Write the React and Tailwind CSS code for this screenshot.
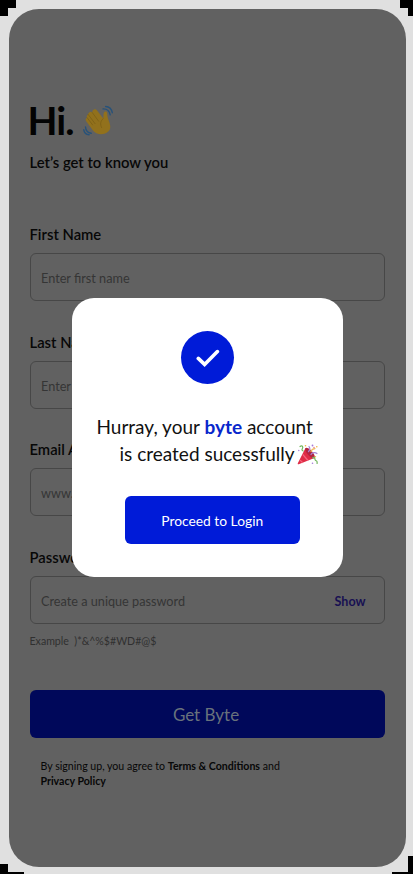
import React from "react";

function WaveIcon() {
  return (
    <svg viewBox="0 0 32 32" className="h-8 w-8" fill="none">
      <path d="M6.200 7.400c1.300-1 2.400-.6 3.200.3C9 6 9.700 4.800 11 4.400c1.500-.5 2.600.3 3.500 1.500l5.700 7.700c.5-1.900 0-4.100.6-5.800.7-1.800 3-1.700 3.300.1.300 2.200.3 4.300 1.200 6.500 1.900 4.700 3.600 9.400-.6 12.600-4.700 3.500-11.400 2.900-14.900-1.800L3.200 16.300c-1.200-1.700-.3-3.200.9-3.600-.8-1.600-.1-2.900 1-3.300.1-.8.500-1.600 1.100-2z" fill="#92711c" />
      <path d="m9.400 7.700 6.200 8.500M5.100 9.400l7 9.300M4.100 12.700l5.500 7.200M20.200 13.600c-3 2.500-3.200 5.800-1.600 9" stroke="#785b14" strokeWidth=".7" strokeLinecap="round" />
      <path d="M20 3.900c3.900-.2 6.500 2.300 7.200 6M22.600 1.500c3.500.2 6 2.600 6.700 6.200M2.500 22c.2 3.500 2.200 5.700 5.700 6.300M.8 24.800c.4 2.900 2.500 4.700 5.300 5" stroke="#27527a" strokeWidth="1.400" strokeLinecap="round" />
    </svg>
  );
}

function PartyIcon() {
  return (
    <svg viewBox="0 0 22 22" className="mt-[2px] h-[22px] w-[22px]" fill="none">
      <path d="m8.500 4 9 10-15.800 6.200c-.7.300-1.200-.2-.9-.9z" fill="#df2c46" />
      <path d="m5.700 10.400 5.300 6.100m-8-.4 2.800 2.700" stroke="#f5657d" strokeWidth="1.300" />
      <ellipse cx="13" cy="9" rx="2.600" ry="6.600" transform="rotate(-42 13 9)" fill="#b32440" />
      <path d="M3 2.500c2.400-1.900 3.500.5 2.200 2.500-.6 1 .1 1.800 1 2M15.500 14c2-1.400 2.300.2 2.600 1.600.4 1.700 2 .6 2 2.500v1.400" stroke="#72b65c" strokeWidth="1.200" strokeLinecap="round" />
      <path d="M11.500 7.500c1.600-1.400 1.500-3.500.5-5M14 10.500c1-2 4-2.600 6-1" stroke="#a884d6" strokeWidth="1.200" strokeLinecap="round" />
      <path d="M14 7.500c.5-2 2-2.800 4-2.900" stroke="#f0bd5c" strokeWidth="1.200" strokeLinecap="round" />
      <g fill="#f0b43c"><circle cx="8.500" cy="1.800" r=".8" /><circle cx="19.800" cy="2.800" r=".8" /><circle cx="18.500" cy="12.700" r=".7" /></g>
      <g fill="#a77ad8"><circle cx="15.500" cy="1.500" r=".9" /><circle cx="1.800" cy="6.500" r=".7" /><circle cx="15.500" cy="19.300" r=".8" /></g>
      <circle cx="17" cy="3.500" r=".7" fill="#e5677e" />
    </svg>
  );
}

function Field({ label, placeholder, action }) {
  return (
    <div className="h-[107.700px]">
      <label className="block h-7 text-[14.800px] leading-[18px] font-semibold text-[#070707]">{label}</label>
      <div className="flex h-12 items-center justify-between rounded-[6px] border border-[#474747] pr-[18px] pl-[10.500px]">
        <span className="pt-[2px] text-[12.700px] leading-4 text-[#353535]">{placeholder}</span>
        {action && <button className="pt-[3px] text-[12.500px] leading-4 font-bold text-[#171052]">{action}</button>}
      </div>
    </div>
  );
}

export default function App() {
  return (
    <div className="relative h-[874px] w-[413px] overflow-hidden bg-[#e0e0e0] pt-[9px] pl-[9px] font-['Lato',sans-serif]">
      <div className="absolute top-0 left-0 h-2 w-4 bg-black" />
      <div className="absolute top-2 left-0 h-2 w-2 bg-black" />
      <div className="absolute top-0 right-0 h-2 w-[13px] bg-black" />
      <div className="absolute top-2 right-0 h-2 w-[5px] bg-black" />
      <div className="absolute bottom-0 left-0 h-[10px] w-2 bg-black" />
      <div className="absolute bottom-0 left-2 h-[2px] w-4 bg-black" />
      <div className="absolute right-0 bottom-[2px] h-4 w-[5px] bg-black" />
      <div className="absolute right-0 bottom-0 h-[2px] w-[21px] bg-black" />

      <main className="h-[858px] w-[396.500px] rounded-[30px] bg-[#616161] pt-[88px] pr-[21px] pl-[20.500px]">
        <div className="flex h-12 items-center">
          <h1 className="-ml-[2px] w-[55px] pb-[2px] text-[39px] leading-[46px] font-bold tracking-[-1px] whitespace-nowrap text-[#030303]">Hi.</h1>
          <WaveIcon />
        </div>
        <p className="mt-2 h-[72px] text-[14.800px] leading-[18px] font-semibold text-[#070707]">Let’s get to know you</p>
        <Field label="First Name" placeholder="Enter first name" />
        <Field label="Last Name" placeholder="Enter last name" />
        <Field label="Email Address" placeholder="www.example.com" />
        <Field label="Password" placeholder="Create a unique password" action="Show" />
        <p className="-mt-[22px] text-[10.600px] leading-[14px] whitespace-pre text-[#303030]">{"Example  )*&^%$#WD#@$"}</p>
        <button className="mt-[42px] flex h-12 w-full items-center justify-center rounded-[6px] bg-[#00085a] pt-px pr-[2px] text-[17px] text-[#69727c]">Get Byte</button>
        <p className="mt-[21px] pl-[11px] text-[10.600px] leading-[15px] text-[#070707]">
          By signing up, you agree to <b>Terms &amp; Conditions</b> and<br /><b>Privacy Policy</b>
        </p>
      </main>

      <section className="absolute top-[298px] left-[71.500px] flex h-[279px] w-[271.500px] flex-col items-center rounded-[22px] bg-white pt-[33px]">
        <div className="ml-px flex h-[53px] w-[53px] items-center justify-center rounded-full bg-[#001bd8]">
          <svg viewBox="0 0 24 18" className="h-[18px] w-6" fill="none">
            <path d="m2.300 9.400 6.300 6 12.800-12.800" stroke="white" strokeWidth="3.600" strokeLinecap="round" />
          </svg>
        </div>
        <div className="mt-[29px] w-full text-[19px] leading-[27px] text-[#111]">
          <p className="pl-[25px] whitespace-nowrap">Hurray, your <b className="text-[#0927cc]">byte</b> account</p>
          <div className="flex items-center pl-[48px] whitespace-nowrap"><span className="w-[177px]">is created sucessfully</span><PartyIcon /></div>
        </div>
        <button className="mt-[29px] ml-[10px] flex h-12 w-[175px] items-center justify-center rounded-[6px] bg-[#001bd8] pt-[3px] text-[13.800px] text-white">Proceed to Login</button>
      </section>
    </div>
  );
}
